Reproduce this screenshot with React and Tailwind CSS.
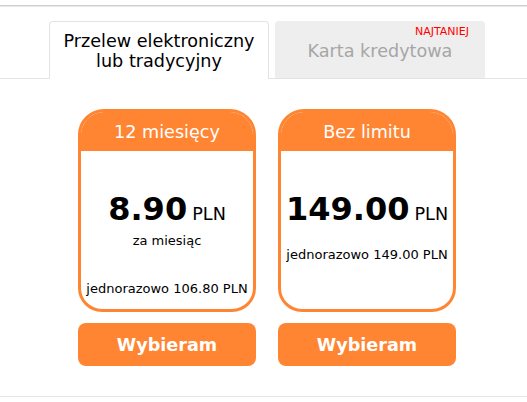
const FONT = { fontFamily: '"DejaVu Sans", Verdana, sans-serif' }

const PLANS = [
  { id: '12m', title: '12 miesięcy', price: '8.90', perMonth: 'za miesiąc', total: 'jednorazowo 106.80 PLN' },
  { id: 'unlimited', title: 'Bez limitu', price: '149.00', total: 'jednorazowo 149.00 PLN' },
]

function PlanCard({ plan }) {
  return (
    <div className="flex w-[178px] flex-col">
      <div className="flex h-[203px] flex-col overflow-hidden rounded-t-[26px] rounded-b-3xl border-[3px] border-[#ff8533] bg-white text-center text-black">
        <div className="h-[39px] bg-[#ff8533] pt-[10px] text-[17.6px] leading-5 text-white">
          {plan.title}
        </div>

        <div className="flex flex-col pt-[40px]">
          <div className="whitespace-nowrap leading-[36px]">
            <span className="text-[32px] font-bold">{plan.price}</span>{' '}
            <span className="text-[17.6px]">PLN</span>
          </div>

          {plan.perMonth ? (
            <>
              <p className="text-[13px] leading-4">{plan.perMonth}</p>
              <p className="mt-[32px] text-[13px] leading-4">{plan.total}</p>
            </>
          ) : (
            <p className="mt-[14px] text-[13px] leading-4">{plan.total}</p>
          )}
        </div>
      </div>

      <button
        type="button"
        className="mt-[11px] h-[43px] w-full rounded-lg bg-[#ff8533] text-[17.6px] font-bold leading-5 text-white"
      >
        Wybieram
      </button>
    </div>
  )
}

export default function App() {
  return (
    <div className="min-h-[402px] bg-white" style={FONT}>
      <div className="h-[5px]" />
      <div className="h-px bg-[#cfcfcf]" />
      <div className="h-px bg-[#e8e8e8]" />

      <div className="flex justify-center pl-[7px] pt-[14px]">
        <div className="flex items-end gap-[6px]">
          <div className="relative z-10 -mb-px flex h-[58px] w-[220px] items-center justify-center rounded-t border border-b-0 border-[#e3e3e3] bg-white pt-px text-center text-[17.6px] leading-5 text-black">
            Przelew elektroniczny
            <br />
            lub tradycyjny
          </div>

          <div className="relative flex h-[57px] w-[210px] items-center justify-center rounded-t bg-[#eeeeee] pt-[2px] text-[17.6px] leading-5 text-[#a6a6a6]">
            <span className="absolute right-[16px] top-[4px] text-[11px] leading-[13px] text-[#ff0000]">
              NAJTANIEJ
            </span>
            Karta kredytowa
          </div>
        </div>
      </div>
      <div className="h-px bg-[#e3e3e3]" />

      <div className="flex justify-center gap-[22px] pl-[7px] pt-[30px]">
        {PLANS.map((plan) => (
          <PlanCard key={plan.id} plan={plan} />
        ))}
      </div>

      <div className="mt-[30px] h-px bg-[#e6e6e6]" />
    </div>
  )
}
